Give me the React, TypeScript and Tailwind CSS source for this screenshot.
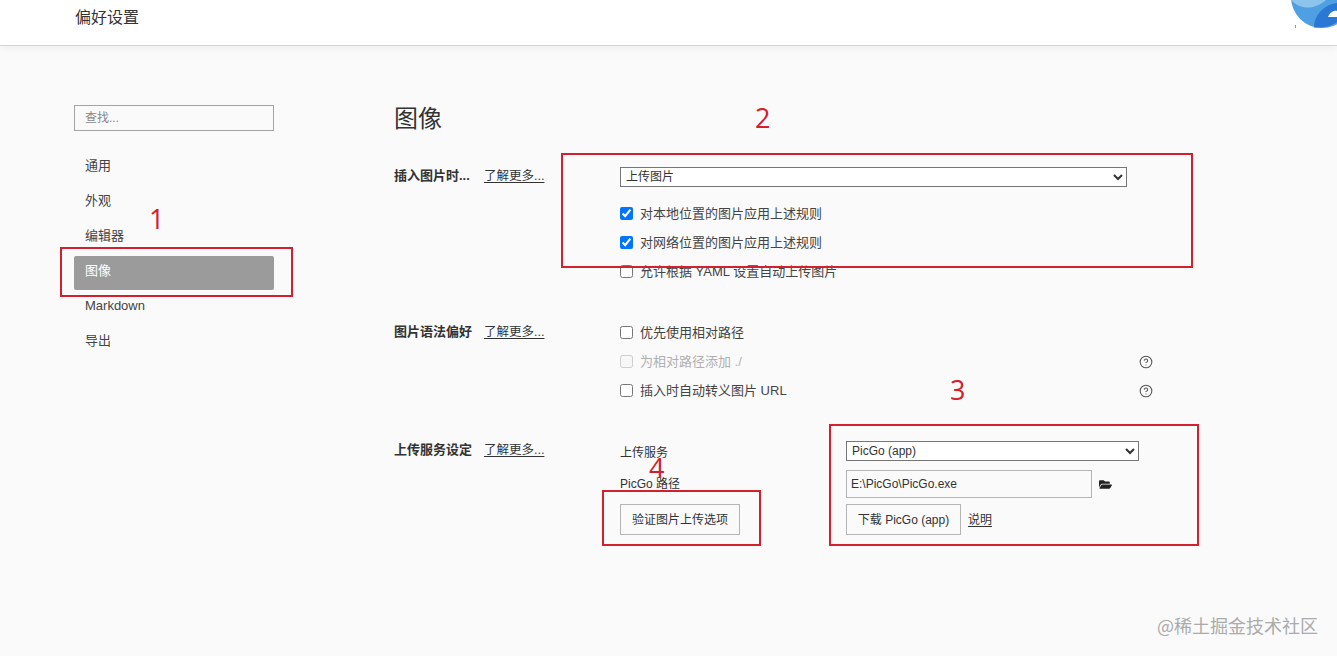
import { CircleHelp } from "lucide-react";
import { FaFolderOpen } from "react-icons/fa";

const font = "font-['Liberation_Sans','Noto_Sans_CJK_SC',sans-serif]";
const navItems = ["通用", "外观", "编辑器", "图像", "Markdown", "导出"];

function SectionLabel({ title }: { title: string }) {
  return (
    <div className="w-[226px] shrink-0 flex text-[13px] leading-5 text-[#333]">
      <span className="w-[90px] font-bold">{title}</span>
      <a className="underline underline-offset-2 text-[12.5px]">了解更多...</a>
    </div>
  );
}

function CheckRow({ label, checked, disabled, help }: { label: string; checked?: boolean; disabled?: boolean; help?: boolean }) {
  return (
    <div className="h-[29px] w-[533px] flex items-center justify-between">
      <label className={`flex items-center text-[13px] ${disabled ? "text-[#b0b0b0]" : "text-[#444]"}`}>
        <input type="checkbox" defaultChecked={checked} disabled={disabled} className="w-[13px] h-[13px] m-0 mr-[7px]" />
        {label}
      </label>
      {help && <CircleHelp size={14} strokeWidth={1.8} className="text-[#555]" />}
    </div>
  );
}

function RedBox({ className }: { className: string }) {
  return <div className={`absolute border-2 border-[#d2202e] pointer-events-none ${className}`} />;
}

function Num({ n, className }: { n: string; className: string }) {
  return <div className={`absolute text-[27px] leading-8 text-[#d2202e] font-['Open_Sans',sans-serif] ${className}`}>{n}</div>;
}

export default function App() {
  return (
    <div className={`relative w-[1337px] h-[656px] overflow-hidden bg-[#fafafa] ${font}`}>
      <header className="relative h-[46px] bg-white border-b border-[#d4d4d4] shadow-[0_2px_8px_rgba(0,0,0,0.05)] pl-[75px] pt-[6px] text-[16px] leading-6 text-[#333]">
        偏好设置
        <svg className="absolute right-0 top-0" width="47" height="30" viewBox="0 0 47 30">
          <circle cx="32" cy="-3" r="31" fill="#4f9fe3" />
          <path d="M1 0 C 8 8 22 12 36 0 Z" fill="#8cc4ee" />
          <path d="M24 27.5 C 24 14 36 4 47 3 L47 22 C 40 27 32 28 24 27.5 Z" fill="#2a77d6" />
          <path d="M38 17 C 40 11 46 10 47 11 L47 17 Z" fill="#ffffff" />
          <rect x="5" y="25" width="1" height="3" fill="#999999" />
        </svg>
      </header>

      <div className="flex">
        <aside className="ml-[74px] w-[200px] shrink-0 pt-[59px]">
          <div className="h-[26px] border border-[#a3a3a3] bg-[#fafafa] pl-[10px] text-[12px] leading-[24px] text-[#888]">查找...</div>
          <nav className="mt-[20px] flex flex-col text-[13px]">
            {navItems.map((item) => (
              <div
                key={item}
                className={`h-[34px] mb-px pl-[11px] pb-[4px] flex items-center rounded-[2px] ${item === "图像" ? "bg-[#9b9b9b] text-white" : "text-[#444]"}`}
              >
                {item}
              </div>
            ))}
          </nav>
        </aside>

        <main className="ml-[120px] pt-[57px] flex-1">
          <h1 className="h-[32px] text-[24px] leading-8 font-normal text-[#333]">图像</h1>

          <section className="mt-[31px] flex">
            <SectionLabel title="插入图片时..." />
            <div className="pt-[1px]">
              <select className="block w-[507px] h-[20px] border border-[#767676] bg-white text-[12px] text-[#333] pl-[1px]">
                <option>上传图片</option>
              </select>
              <div className="mt-[12px]">
                <CheckRow label="对本地位置的图片应用上述规则" checked />
                <CheckRow label="对网络位置的图片应用上述规则" checked />
                <CheckRow label="允许根据 YAML 设置自动上传图片" />
              </div>
            </div>
          </section>

          <section className="mt-[36px] flex">
            <SectionLabel title="图片语法偏好" />
            <div className="-mt-[4px]">
              <CheckRow label="优先使用相对路径" />
              <CheckRow label="为相对路径添加 ./" disabled help />
              <CheckRow label="插入时自动转义图片 URL" help />
            </div>
          </section>

          <section className="mt-[35px] flex">
            <SectionLabel title="上传服务设定" />
            <div className="pt-[2px] grid grid-cols-[226px_auto] grid-rows-[28px_34px_31px] items-start text-[12px] leading-5 text-[#333]">
              <div className="pt-px">上传服务</div>
              <select className="block -mt-px w-[293px] h-[20px] border border-[#767676] bg-white text-[12px] text-[#333] pl-[1px]">
                <option>PicGo (app)</option>
              </select>
              <div className="pt-[4px]">PicGo 路径</div>
              <div className="flex items-center">
                <input
                  readOnly
                  value="E:\PicGo\PicGo.exe"
                  className="w-[246px] h-[28px] border border-[#b5b5b5] bg-[#fafafa] pl-[4px] text-[12px] text-[#333] outline-none"
                />
                <FaFolderOpen size={13} className="ml-[7px] text-[#222]" />
              </div>
              <button className="w-[120px] h-[31px] border border-[#b5b5b5] bg-[#fafafa] text-[12px] text-[#333]">验证图片上传选项</button>
              <div className="flex items-center">
                <button className="w-[115px] h-[31px] border border-[#b5b5b5] bg-[#fafafa] text-[12px] text-[#333]">下载 PicGo (app)</button>
                <a className="ml-[7px] underline underline-offset-2">说明</a>
              </div>
            </div>
          </section>
        </main>
      </div>

      <RedBox className="left-[60px] top-[247px] w-[233px] h-[50px]" />
      <RedBox className="left-[561px] top-[153px] w-[632px] h-[115px]" />
      <RedBox className="left-[829px] top-[424px] w-[370px] h-[122px]" />
      <RedBox className="left-[602px] top-[490px] w-[159px] h-[56px]" />
      <Num n="1" className="left-[149px] top-[203px]" />
      <Num n="2" className="left-[755px] top-[102px]" />
      <Num n="3" className="left-[950px] top-[374px]" />
      <Num n="4" className="left-[649px] top-[452px]" />

      <div className="absolute left-[1157px] top-[613px] text-[18px] leading-6 text-[#ababab] font-['Noto_Sans_CJK_SC',sans-serif]">@稀土掘金技术社区</div>
    </div>
  );
}
